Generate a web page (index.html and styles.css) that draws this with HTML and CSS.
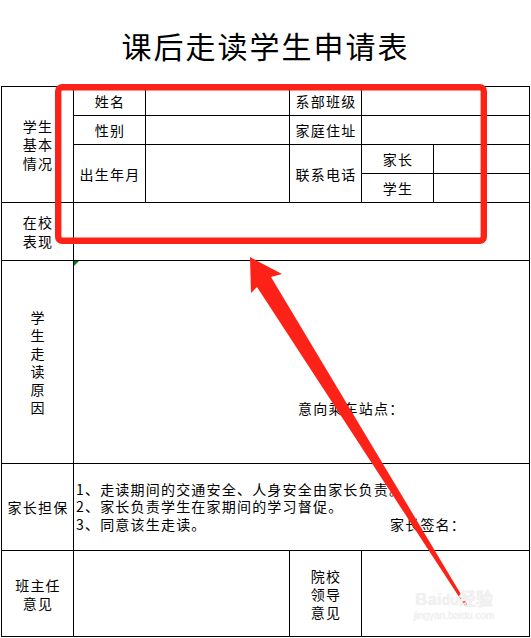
FILE: index.html
```html
<!DOCTYPE html>
<html lang="zh-CN">
<head>
<meta charset="utf-8">
<title>课后走读学生申请表</title>
<link rel="stylesheet" href="styles.css">
</head>
<body>
<div class="page">
  <h1 class="title">课后走读学生申请表</h1>
  <div class="form">
    <div class="cell basic">学生<br>基本<br>情况</div>
    <div class="cell r1 c2">姓名</div>
    <div class="cell r1 c34"></div>
    <div class="cell r1 c5">系部班级</div>
    <div class="cell r1 c67"></div>

    <div class="cell r2 c2">性别</div>
    <div class="cell r2 c34"></div>
    <div class="cell r2 c5">家庭住址</div>
    <div class="cell r2 c67"></div>

    <div class="cell r34 c2">出生年月</div>
    <div class="cell r34 c34"></div>
    <div class="cell r34 c5">联系电话</div>
    <div class="cell r3 c6">家长</div>
    <div class="cell r3 c7"></div>
    <div class="cell r4 c6">学生</div>
    <div class="cell r4 c7"></div>

    <div class="cell r5 c1">在校<br>表现</div>
    <div class="cell r5 wide"></div>

    <div class="cell r6 c1">学<br>生<br>走<br>读<br>原<br>因</div>
    <div class="cell r6 wide reason">意向乘车站点：</div>

    <div class="cell r7 c1">家长担保</div>
    <div class="cell r7 wide pledge">
      <p>1、走读期间的交通安全、人身安全由家长负责。</p>
      <p>2、家长负责学生在家期间的学习督促。</p>
      <p class="last"><span>3、同意该生走读。</span><span class="sign">家长签名：</span></p>
    </div>

    <div class="cell r8 c1">班主任<br>意见</div>
    <div class="cell r8 c234"></div>
    <div class="cell r8 c5">院校<br>领导<br>意见</div>
    <div class="cell r8 c67"></div>
  </div>

  <svg class="annot" width="531" height="638" viewBox="0 0 531 638" aria-hidden="true">
    <rect x="58.2" y="87.2" width="425.6" height="153.6" rx="4" ry="4" fill="none" stroke="#fd2217" stroke-width="6.4"/>
    <polygon fill="#fd2217" points="250,257 282,274 271,277 468,606 465,606 257,287 251,293"/>
  </svg>

  <div class="watermark">
    <div class="wm-logo">Bai<span class="wm-du">du</span>经验</div>
    <div class="wm-url">jingyan.baidu.com</div>
  </div>
</div>
</body>
</html>
```

FILE: styles.css
```css
* {
  box-sizing: border-box;
  margin: 0;
  padding: 0;
}

body {
  margin: 0;
  background: #fff;
  color: #000;
  font-family: "Noto Sans CJK SC", "Noto Sans", sans-serif;
}

.page {
  position: relative;
  width: 531px;
  height: 638px;
  overflow: hidden;
}

.title {
  height: 86px;
  display: flex;
  align-items: center;
  justify-content: center;
  padding-top: 3px;
  font-size: 30px;
  font-weight: 400;
  letter-spacing: 2px;
}

.form {
  margin-left: 1px;
  width: max-content;
  display: grid;
  grid-template-columns: repeat(6, 71px) 95px;
  grid-template-rows: repeat(4, 28px) 57px 202px 86px 85px;
  gap: 1px;
  padding: 1px;
  background: #000;
}

.cell {
  position: relative;
  background: #fff;
  display: flex;
  align-items: center;
  justify-content: center;
  text-align: center;
  font-size: 14px;
  line-height: 18px;
  letter-spacing: 1.2px;
  padding-left: 1px;
}

/* placement */
.basic { grid-row: 1 / 5; grid-column: 1; }
.r1 { grid-row: 1; }
.r2 { grid-row: 2; }
.r3 { grid-row: 3; }
.r4 { grid-row: 4; }
.r34 { grid-row: 3 / 5; }
.r5 { grid-row: 5; }
.r6 { grid-row: 6; }
.r7 { grid-row: 7; }
.r8 { grid-row: 8; }

.c1 { grid-column: 1; }
.c2 { grid-column: 2; }
.c34 { grid-column: 3 / 5; }
.c234 { grid-column: 2 / 5; }
.c5 { grid-column: 5; }
.c6 { grid-column: 6; }
.c7 { grid-column: 7; }
.c67 { grid-column: 6 / 8; }
.wide { grid-column: 2 / 8; }

.basic,
.r5.c1 {
  line-height: 18.5px;
}

.r8 {
  line-height: 18px;
}

.reason {
  align-items: flex-start;
  justify-content: flex-start;
  padding: 138px 0 0 224px;
}

.reason::before {
  content: "";
  position: absolute;
  left: 0;
  top: 0;
  border-top: 5px solid #0a7d12;
  border-right: 5px solid transparent;
}

.pledge {
  flex-direction: column;
  align-items: stretch;
  justify-content: center;
  text-align: left;
  padding: 0 0 0 2px;
  line-height: 17.5px;
}

.pledge .last {
  display: flex;
}

.pledge .sign {
  margin-left: auto;
  margin-right: 63px;
}

.annot {
  position: absolute;
  left: 0;
  top: 0;
  pointer-events: none;
}

.watermark {
  position: absolute;
  left: 406px;
  top: 590px;
  width: 96px;
  color: #f1f1f1;
  pointer-events: none;
  text-align: center;
}

.wm-logo {
  font-family: "Liberation Sans", Arial, sans-serif;
  font-size: 17px;
  font-weight: 700;
  line-height: 20px;
  letter-spacing: 0;
  text-shadow: 0 0 1px #e4e4e4;
}

.wm-du {
  font-size: 14px;
}

.wm-url {
  font-family: "Liberation Sans", Arial, sans-serif;
  font-size: 10px;
  line-height: 12px;
  text-shadow: 0 0 1px #e6e6e6;
}
```
